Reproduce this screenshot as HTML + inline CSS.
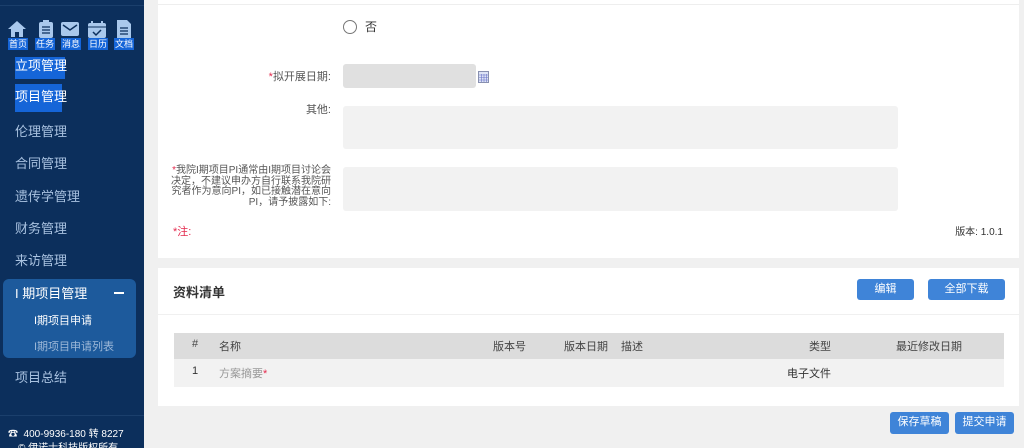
<!DOCTYPE html><html><head><meta charset="utf-8"><style>
*{margin:0;padding:0;box-sizing:border-box}
html,body{width:1024px;height:448px;overflow:hidden}
body{background:#f0f0f0;font-family:"Liberation Sans","Noto Sans CJK SC",sans-serif;position:relative}
.a{position:absolute;white-space:nowrap}
#sb{position:absolute;left:0;top:0;width:144px;height:448px;background:#0c2f5c;overflow:hidden}
.mi{position:absolute;left:15px;font-size:13px;color:#a9c2e0}
.ic{position:absolute;top:19px;width:20px;height:20px}
.il{position:absolute;top:38px;font-size:9px;color:#fff;background:#1565d8;padding:0 1px;line-height:12px}
.card{position:absolute;background:#fff;left:158px;width:861px}
.btn{position:absolute;background:#3f84d8;color:#fff;font-size:11px;text-align:center;border-radius:3px;line-height:23px}
.lab{position:absolute;font-size:11px;color:#555;text-align:right;white-space:nowrap}
.r{color:#e4294d}
</style></head><body>
<div id="sb">
<div class="a" style="left:0;top:5px;width:144px;height:1px;background:#1b3f6c"></div>
<svg class="ic" style="left:7px" viewBox="0 0 20 20"><path d="M10 2L1 10h3v8h4v-5h4v5h4v-8h3z" fill="#a9c8ec"/></svg>
<svg class="ic" style="left:36px" viewBox="0 0 20 20"><rect x="3" y="3" width="14" height="16" rx="2" fill="#a9c8ec"/><rect x="7" y="1" width="6" height="4" fill="#a9c8ec"/><path d="M6 8h8M6 11h8M6 14h8" stroke="#0c2f5c" stroke-width="1.3"/></svg>
<svg class="ic" style="left:60px" viewBox="0 0 20 20"><rect x="1" y="3" width="18" height="14" rx="2" fill="#a9c8ec"/><path d="M3 6l7 5 7-5" stroke="#0c2f5c" stroke-width="1.5" fill="none"/></svg>
<svg class="ic" style="left:87px" viewBox="0 0 20 20"><rect x="1" y="4" width="18" height="15" rx="2" fill="#a9c8ec"/><path d="M1 8h18" stroke="#0c2f5c"/><path d="M5 2v4M15 2v4" stroke="#a9c8ec" stroke-width="2"/><path d="M6 13l3 3 5-5" stroke="#0c2f5c" stroke-width="1.5" fill="none"/></svg>
<svg class="ic" style="left:114px" viewBox="0 0 20 20"><path d="M3 1h10l4 4v14H3z" fill="#a9c8ec"/><path d="M6 9h8M6 12h8M6 15h8" stroke="#0c2f5c" stroke-width="1.3"/></svg>
<div class="il" style="left:8px">首页</div><div class="il" style="left:35px">任务</div><div class="il" style="left:61px">消息</div><div class="il" style="left:88px">日历</div><div class="il" style="left:114px">文档</div>
<div class="a" style="left:15px;top:57px;width:50px;height:22px;background:#1565d8;color:#fff;font-size:13px;line-height:18px">立项管理</div>
<div class="a" style="left:15px;top:84px;width:47px;height:28px;background:#1565d8;color:#fff;font-size:13px;line-height:26px">项目管理</div>
<div class="mi" style="top:121px">伦理管理</div>
<div class="mi" style="top:153px">合同管理</div>
<div class="mi" style="top:186px">遗传学管理</div>
<div class="mi" style="top:218px">财务管理</div>
<div class="mi" style="top:250px">来访管理</div>
<div class="a" style="left:3px;top:279px;width:133px;height:79px;background:#1d5a9c;border-radius:6px"></div>
<div class="a" style="left:15px;top:283px;font-size:13px;color:#fff">I 期项目管理</div>
<div class="a" style="left:114px;top:292px;width:10px;height:2px;background:#fff"></div>
<div class="a" style="left:34px;top:312px;font-size:11px;color:#fff">I期项目申请</div>
<div class="a" style="left:34px;top:338px;font-size:11px;color:#9db8d8">I期项目申请列表</div>
<div class="mi" style="top:367px">项目总结</div>
<div class="a" style="left:0;top:415px;width:144px;height:1px;background:#1b3f6c"></div>
<div class="a" style="left:8px;top:425px;font-size:10px;color:#fff">☎&nbsp; 400-9936-180 转 8227</div>
<div class="a" style="left:18px;top:439px;font-size:10px;color:#fff">© 伊诺士科技版权所有</div>
</div>
<div class="card" style="top:0;height:258px">
<div class="a" style="left:0;top:4px;width:861px;height:1px;background:#eee"></div>
<div class="a" style="left:185px;top:20px;width:14px;height:14px;border:1px solid #777;border-radius:50%"></div>
<div class="a" style="left:207px;top:18px;font-size:12px;color:#333">否</div>
<div class="lab" style="left:0;width:173px;top:68px;font-size:11px"><span class="r">*</span>拟开展日期:</div>
<div class="a" style="left:185px;top:64px;width:133px;height:24px;background:#e0e0e0;border-radius:3px"></div>
<svg class="a" style="left:320px;top:71px" width="11" height="12" viewBox="0 0 11 12"><rect x=".5" y=".5" width="10" height="11" fill="#dde3f5" stroke="#8890b0"/><path d="M1 4h9M1 6.5h9M1 9h9M3.5 3v8M6 3v8M8.5 3v8" stroke="#6a74c8" stroke-width=".6"/></svg>
<div class="lab" style="left:0;width:173px;top:101px">其他:</div>
<div class="a" style="left:185px;top:106px;width:555px;height:43px;background:#f2f2f2;border-radius:3px"></div>
<div class="lab" style="left:0;width:173px;top:166px;line-height:10.7px;font-size:10px"><span class="r">*</span>我院I期项目PI通常由I期项目讨论会<br>决定，不建议申办方自行联系我院研<br>究者作为意向PI，如已接触潜在意向<br>PI，请予披露如下:</div>
<div class="a" style="left:185px;top:167px;width:555px;height:44px;background:#f2f2f2;border-radius:3px"></div>
<div class="a r" style="left:15px;top:223px;font-size:11px">*注:</div>
<div class="a" style="right:16px;top:223px;font-size:10px;color:#333">版本: 1.0.1</div>
</div>
<div class="card" style="top:268px;height:138px">
<div class="a" style="left:15px;top:14px;font-size:13px;font-weight:bold;color:#333">资料清单</div>
<div class="btn" style="left:699px;top:11px;width:57px;line-height:21px">编辑</div>
<div class="btn" style="left:770px;top:11px;width:77px;line-height:21px">全部下载</div>
<div class="a" style="left:0;top:46px;width:861px;height:1px;background:#f0f0f0"></div>
<div class="a" style="left:16px;top:65px;width:830px;height:26px;background:#dcdcdc"></div>
<div class="a" style="left:16px;top:91px;width:830px;height:28px;background:#f2f2f2"></div>
<div class="a" style="top:70px;left:34px;font-size:11px;color:#444">#</div>
<div class="a" style="top:70px;left:61px;font-size:11px;color:#444">名称</div>
<div class="a" style="top:70px;left:335px;font-size:11px;color:#444">版本号</div>
<div class="a" style="top:70px;left:406px;font-size:11px;color:#444">版本日期</div>
<div class="a" style="top:70px;left:463px;font-size:11px;color:#444">描述</div>
<div class="a" style="top:70px;left:651px;font-size:11px;color:#444">类型</div>
<div class="a" style="top:70px;left:738px;font-size:11px;color:#444">最近修改日期</div>
<div class="a" style="top:97px;left:34px;font-size:11px;color:#333">1</div>
<div class="a" style="top:97px;left:61px;font-size:11px;color:#999">方案摘要<span class="r">*</span></div>
<div class="a" style="top:97px;left:629px;font-size:11px;color:#333">电子文件</div>
</div>
<div class="btn" style="left:890px;top:412px;width:59px;height:22px;line-height:20px">保存草稿</div>
<div class="btn" style="left:955px;top:412px;width:59px;height:22px;line-height:20px">提交申请</div>
</body></html>
